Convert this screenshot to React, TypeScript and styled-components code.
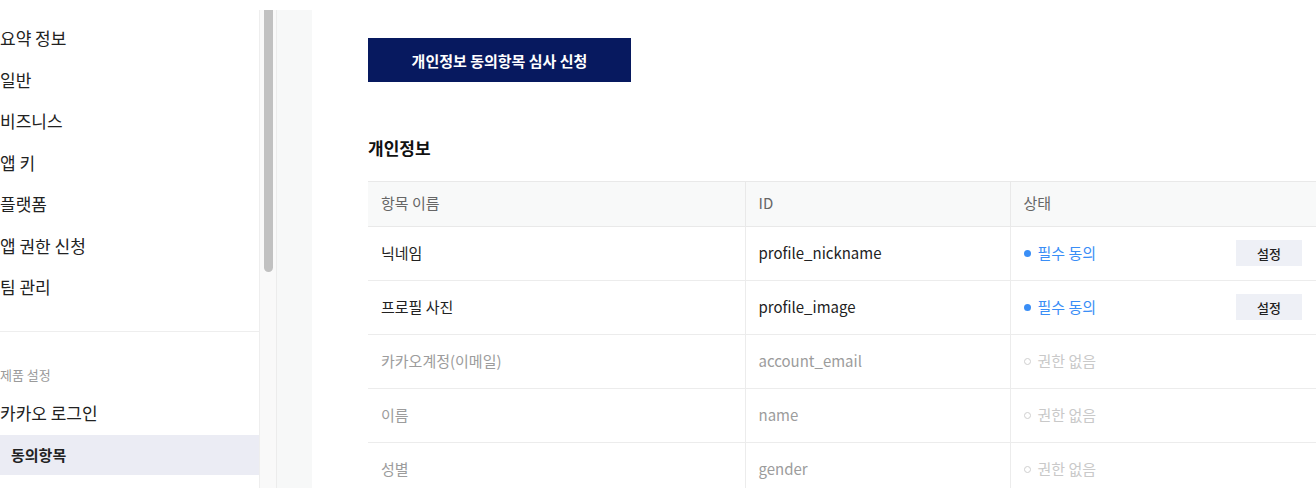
import styled, { createGlobalStyle } from "styled-components";

const GlobalStyle = createGlobalStyle`
  html, body {
    margin: 0;
    padding: 0;
    background: #fff;
  }
  body {
    font-family: "Noto Sans CJK KR", "Noto Sans", sans-serif;
    color: #222;
  }
`;

const Page = styled.div`
  height: 488px;
  overflow: hidden;
  padding-top: 10px;
  box-sizing: border-box;
  display: flex;
`;

const Sidebar = styled.aside`
  width: 260px;
  flex-shrink: 0;
  border-right: 1px solid #eeeeee;
  box-sizing: border-box;
`;

const NavGroup = styled.ul`
  list-style: none;
  margin: 0;
  padding: 7px 0 23px;
`;

const NavItem = styled.li`
  height: 41.5px;
  line-height: 41.5px;
  font-size: 17px;
  color: #222;
  white-space: nowrap;
`;

const Section = styled.div`
  border-top: 1px solid #eeeeee;
  padding-top: 33px;
`;

const SectionLabel = styled.div`
  font-size: 13px;
  line-height: 20px;
  color: #9a9a9a;
  margin-bottom: 7px;
`;

const SubItem = styled.div<{ $active?: boolean }>`
  margin-top: 2px;
  height: 40px;
  line-height: 40px;
  padding-left: 11px;
  font-size: 15px;
  font-weight: ${(p) => (p.$active ? 700 : 400)};
  background: ${(p) => (p.$active ? "#ebecf4" : "transparent")};
  color: #222;
`;

const ScrollTrack = styled.div`
  width: 16px;
  flex-shrink: 0;
  background: #f9f9f9;
  display: flex;
  justify-content: center;
`;

const ScrollThumb = styled.div`
  width: 9px;
  height: 262px;
  background: #c1c1c1;
  border-radius: 0 0 5px 5px;
`;

const Gutter = styled.div`
  width: 36px;
  flex-shrink: 0;
  background: #f7f8f8;
  border-left: 1px solid #ececec;
  box-sizing: border-box;
`;

const Main = styled.main`
  flex: 1;
  padding: 28px 0 0 56px;
  min-width: 0;
`;

const ReviewButton = styled.button`
  width: 263px;
  height: 44px;
  border: none;
  background: #07195f;
  color: #fff;
  font-family: inherit;
  font-size: 15px;
  font-weight: 700;
  cursor: pointer;
`;

const Heading = styled.h3`
  margin: 54px 0 21px;
  font-size: 17px;
  line-height: 24px;
  font-weight: 700;
  color: #111;
`;

const Table = styled.table`
  width: 100%;
  border-collapse: collapse;
  table-layout: fixed;
  font-size: 15px;
  line-height: 20px;
`;

const HeadCell = styled.th<{ $width?: number }>`
  box-sizing: border-box;
  width: ${(p) => (p.$width ? `${p.$width}px` : "auto")};
  height: 45px;
  padding: 0 13px 2px;
  text-align: left;
  font-weight: 400;
  color: #666;
  background: #f8f9f9;
  border-top: 1px solid #e9e9e9;
  border-bottom: 1px solid #e9e9e9;
  & + & {
    border-left: 1px solid #e9e9e9;
  }
`;

const Cell = styled.td<{ $muted?: boolean }>`
  box-sizing: border-box;
  height: 54px;
  padding: 0 14px 1px 13px;
  color: ${(p) => (p.$muted ? "#9c9c9c" : "#222")};
  border-bottom: 1px solid #ececec;
  & + & {
    border-left: 1px solid #ececec;
  }
`;

const StatusWrap = styled.div`
  display: flex;
  align-items: center;
  justify-content: space-between;
`;

const Status = styled.span<{ $on: boolean }>`
  display: inline-flex;
  align-items: center;
  gap: 7px;
  color: ${(p) => (p.$on ? "#3a8ef6" : "#c9c9c9")};
  &::before {
    content: "";
    width: 7px;
    height: 7px;
    border-radius: 50%;
    box-sizing: border-box;
    background: ${(p) => (p.$on ? "#3a8ef6" : "transparent")};
    border: ${(p) => (p.$on ? "none" : "1px solid #cfcfcf")};
  }
`;

const SetButton = styled.button`
  width: 66px;
  height: 26px;
  border: none;
  background: #eef0f6;
  color: #222;
  font-family: inherit;
  font-size: 13px;
  font-weight: 500;
  cursor: pointer;
`;

const navItems = ["요약 정보", "일반", "비즈니스", "앱 키", "플랫폼", "앱 권한 신청", "팀 관리"];

const rows = [
  { name: "닉네임", id: "profile_nickname", on: true },
  { name: "프로필 사진", id: "profile_image", on: true },
  { name: "카카오계정(이메일)", id: "account_email", on: false },
  { name: "이름", id: "name", on: false },
  { name: "성별", id: "gender", on: false },
];

export default function App() {
  return (
    <>
      <GlobalStyle />
      <Page>
        <Sidebar>
          <NavGroup>
            {navItems.map((item) => (
              <NavItem key={item}>{item}</NavItem>
            ))}
          </NavGroup>
          <Section>
            <SectionLabel>제품 설정</SectionLabel>
            <NavItem as="div">카카오 로그인</NavItem>
            <SubItem $active>동의항목</SubItem>
          </Section>
        </Sidebar>
        <ScrollTrack>
          <ScrollThumb />
        </ScrollTrack>
        <Gutter />
        <Main>
          <ReviewButton>개인정보 동의항목 심사 신청</ReviewButton>
          <Heading>개인정보</Heading>
          <Table>
            <thead>
              <tr>
                <HeadCell $width={377}>항목 이름</HeadCell>
                <HeadCell $width={265}>ID</HeadCell>
                <HeadCell>상태</HeadCell>
              </tr>
            </thead>
            <tbody>
              {rows.map((r) => (
                <tr key={r.id}>
                  <Cell $muted={!r.on}>{r.name}</Cell>
                  <Cell $muted={!r.on}>{r.id}</Cell>
                  <Cell>
                    <StatusWrap>
                      <Status $on={r.on}>{r.on ? "필수 동의" : "권한 없음"}</Status>
                      {r.on && <SetButton>설정</SetButton>}
                    </StatusWrap>
                  </Cell>
                </tr>
              ))}
            </tbody>
          </Table>
        </Main>
      </Page>
    </>
  );
}
